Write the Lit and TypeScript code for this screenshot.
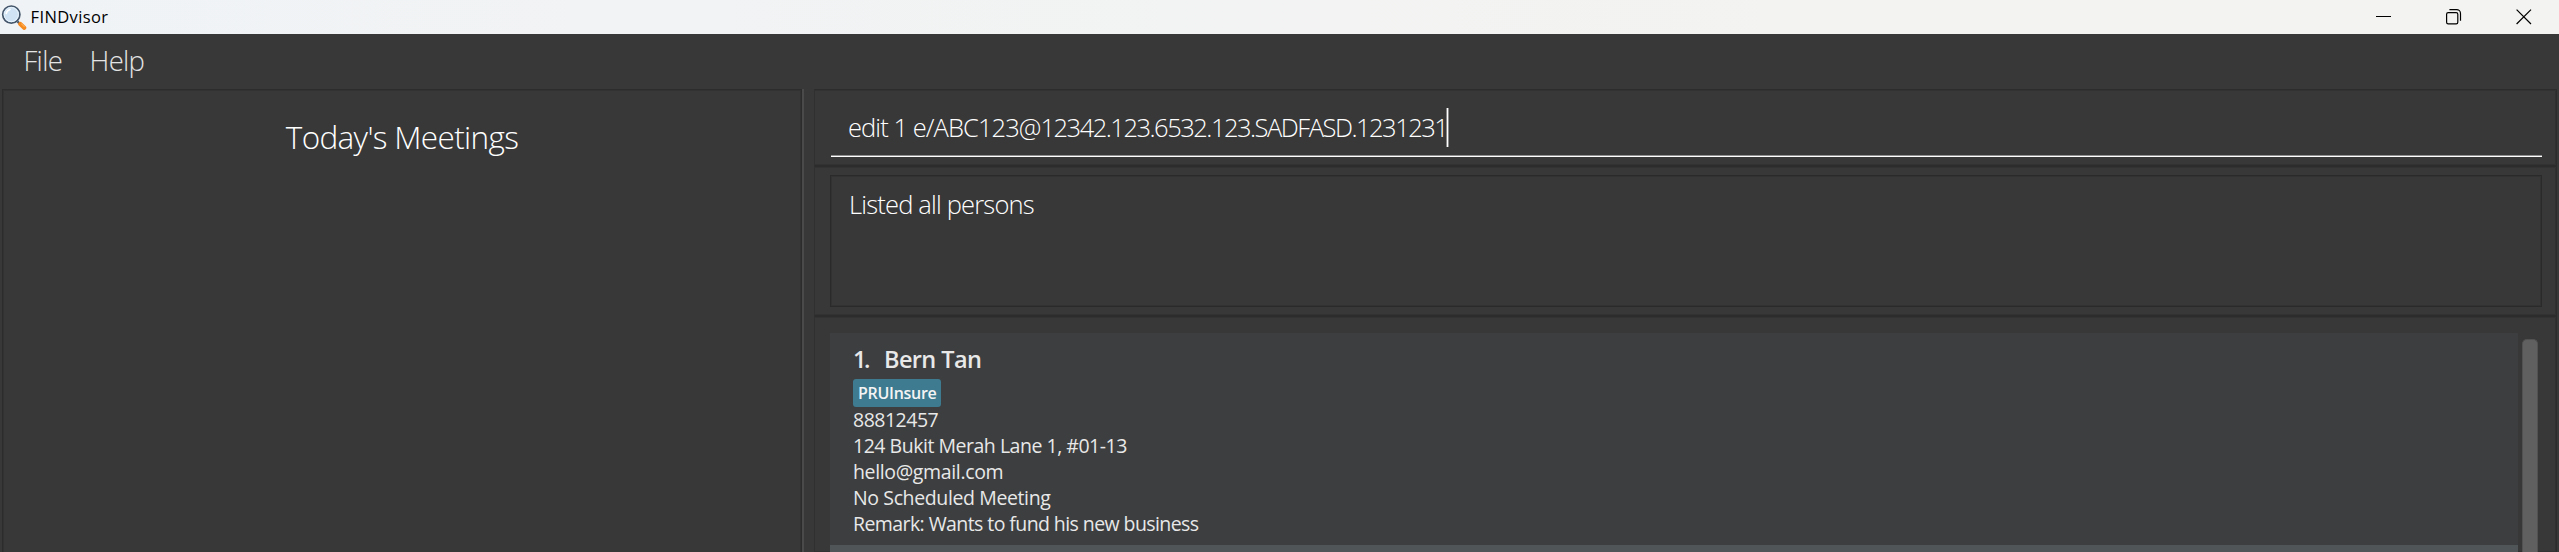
import { LitElement, html, css } from "lit";

interface Person {
  index: number;
  name: string;
  tags: string[];
  details: { kind: string; text: string }[];
}

const people: Person[] = [
  {
    index: 1,
    name: "Bern Tan",
    tags: ["PRUInsure"],
    details: [
      { kind: "phone", text: "88812457" },
      { kind: "address", text: "124 Bukit Merah Lane 1, #01-13" },
      { kind: "email", text: "hello@gmail.com" },
      { kind: "meeting", text: "No Scheduled Meeting" },
      { kind: "remark", text: "Remark: Wants to fund his new business" },
    ],
  },
];

class TitleBar extends LitElement {
  static styles = css`
    :host {
      display: flex;
      align-items: center;
      height: 34px;
      box-sizing: border-box;
      background: linear-gradient(90deg, #f0f3f6, #f3f3f1 70%);
      color: #000;
    }
    .logo { width: 26px; height: 26px; margin: 0 0 0 1px; }
    .name { font-size: 16.5px; letter-spacing: 0.38px; line-height: 34px; margin-left: 3.5px; }
    .controls { margin-left: auto; display: flex; margin-right: 27px; gap: 54px; align-items: center; }
    .controls svg { width: 16px; height: 16px; display: block; }
  `;
  render() {
    return html`
      <svg class="logo" viewBox="0 0 26 26">
        <path d="M16.5 17.5 L19.5 20.5" stroke="#47586a" stroke-width="2.4" />
        <path d="M19.3 19.9 L23.2 23.8" stroke="#f58a1f" stroke-width="4.2" stroke-linecap="round" />
        <path d="M20.4 19.6 L23.6 22.8" stroke="#ffad4d" stroke-width="1.2" />
        <circle cx="10.3" cy="10.6" r="8.6" fill="#cfe3f5" stroke="#44566a" stroke-width="1.7" />
        <circle cx="10.3" cy="10.6" r="7.1" fill="none" stroke="#e8f3fb" stroke-width="1" />
        <path d="M5.2 9.5 A5.4 5.4 0 0 1 9 5.4" fill="none" stroke="#fff" stroke-width="1.6" stroke-linecap="round" />
      </svg>
      <span class="name">FINDvisor</span>
      <div class="controls">
        <svg viewBox="0 0 16 16"><rect x="0" y="7" width="15" height="1" fill="#000" /></svg>
        <svg viewBox="0 0 16 16" fill="none" stroke="#000" stroke-width="1.2">
          <rect x="0.6" y="3.6" width="11.2" height="11.2" rx="1.6" />
          <path d="M3.4 0.6 H10.6 A3.9 3.9 0 0 1 14.5 4.5 V11.8" />
        </svg>
        <svg viewBox="0 0 16 16" fill="none" stroke="#000" stroke-width="1.2"><path d="M0.6 0.6 L15 15 M15 0.6 L0.6 15" /></svg>
      </div>
    `;
  }
}
customElements.define("title-bar", TitleBar);

class PersonCard extends LitElement {
  static properties = { person: { attribute: false } };
  declare person: Person;
  static styles = css`
    :host {
      display: block;
      height: 212px;
      box-sizing: border-box;
      padding: 11px 0 0 23px;
      background: #3c3e3f;
      color: #e8e8e8;
      font-size: 19.5px;
      white-space: nowrap;
    }
    .heading { display: flex; font-size: 23.5px; font-weight: 600; line-height: 30px; height: 35px; }
    .index { width: 31px; letter-spacing: -2.4px; }
    .name { letter-spacing: -0.6px; }
    .tags { display: flex; height: 28px; }
    .tag {
      box-sizing: border-box;
      width: 88px;
      border-radius: 3px;
      background: #3e7b91;
      color: #f4f4f4;
      font-size: 16px;
      font-weight: 600;
      line-height: 28px;
      letter-spacing: -0.28px;
      padding-left: 5px;
    }
    .line { line-height: 26px; height: 26px; }
    .phone { letter-spacing: -0.5px; }
    .address { letter-spacing: -0.48px; }
    .email { letter-spacing: -0.35px; }
    .meeting { letter-spacing: -0.38px; }
    .remark { letter-spacing: -0.58px; }
  `;
  render() {
    const p = this.person;
    return html`
      <div class="heading"><span class="index">${p.index}.</span><span class="name">${p.name}</span></div>
      <div class="tags">${p.tags.map((t) => html`<span class="tag">${t}</span>`)}</div>
      ${p.details.map((d) => html`<div class="line ${d.kind}">${d.text}</div>`)}
    `;
  }
}
customElements.define("person-card", PersonCard);

class AppRoot extends LitElement {
  static styles = css`
    :host {
      display: flex;
      flex-direction: column;
      height: 552px;
      overflow: hidden;
      background: #383838;
      font-family: "Open Sans", "Noto Sans", sans-serif;
    }
    .menu {
      display: flex;
      height: 55px;
      line-height: 53px;
      padding-left: 23.5px;
      gap: 27.5px;
      box-sizing: border-box;
      font-size: 27.5px;
      font-weight: 300;
      color: #e4e4e4;
      letter-spacing: -0.7px;
    }
    .body { display: flex; flex: 1; min-height: 0; }
    .meetings {
      box-sizing: border-box;
      width: 800px;
      margin-left: 2px;
      border: solid #2c2c2c;
      border-width: 1px 1px 0;
      box-shadow: inset 1px 1px #323232, inset -1px 0 #323232;
      padding-top: 27px;
      text-align: center;
      font-size: 31.5px;
      font-weight: 300;
      line-height: 40px;
      letter-spacing: -0.66px;
      color: #fff;
    }
    .divider { width: 2px; background: #4a4a4a; }
    .main { display: flex; flex-direction: column; width: 1743px; margin-left: 10px; }
    .pane {
      box-sizing: border-box;
      border: 1px solid #2c2c2c;
      border-left-color: #303030;
      box-shadow: inset 0 1px #323232, inset 0 -1px #323232, inset -1px 0 #303030;
      padding: 0 14px 0 16px;
    }
    .command { height: 77px; padding-top: 18px; }
    .field {
      display: flex;
      height: 49px;
      box-sizing: border-box;
      border-bottom: 1px solid #fff;
      box-shadow: inset 0 -1px #8f8f8f;
      padding-left: 17px;
      font-size: 25.5px;
      font-weight: 300;
      line-height: 39px;
      color: #fff;
      white-space: nowrap;
    }
    .lead { letter-spacing: -0.93px; }
    .rest { letter-spacing: -1.5px; }
    .caret { width: 1px; height: 39px; background: #fff; box-shadow: 1px 0 #8a8a8a, -1px 0 #8a8a8a; }
    .result { height: 150px; padding-top: 8px; }
    .message {
      height: 132px;
      box-sizing: border-box;
      margin-left: -1px;
      border: 1px solid #2a2a2a;
      box-shadow: inset 1px 1px #323232, inset -1px -1px #323232;
      padding: 8px 0 0 18px;
      font-size: 25.5px;
      font-weight: 300;
      line-height: 40px;
      letter-spacing: -0.82px;
      color: #fff;
    }
    .persons { display: flex; flex: 1; padding-top: 16px; padding-left: 15px; border-bottom: 0; min-height: 0; }
    .list { width: 1688px; background: #505558; }
    .thumb {
      width: 16px;
      box-sizing: border-box;
      margin: 6px 0 0 4px;
      border: 1px solid #525252;
      border-bottom: 0;
      border-radius: 5px 5px 0 0;
      background: #606060;
    }
  `;
  render() {
    return html`
      <title-bar></title-bar>
      <div class="menu"><span>File</span><span>Help</span></div>
      <div class="body">
        <div class="meetings">Today's Meetings</div>
        <div class="divider"></div>
        <div class="main">
          <div class="pane command">
            <div class="field"><span><span class="lead">edit 1 e/ABC123@</span><span class="rest">12342.123.6532.123.SADFASD.1231231</span></span><span class="caret"></span></div>
          </div>
          <div class="pane result"><div class="message">Listed all persons</div></div>
          <div class="pane persons">
            <div class="list">${people.map((p) => html`<person-card .person=${p}></person-card>`)}</div>
            <div class="thumb"></div>
          </div>
        </div>
      </div>
    `;
  }
}
customElements.define("app-root", AppRoot);
